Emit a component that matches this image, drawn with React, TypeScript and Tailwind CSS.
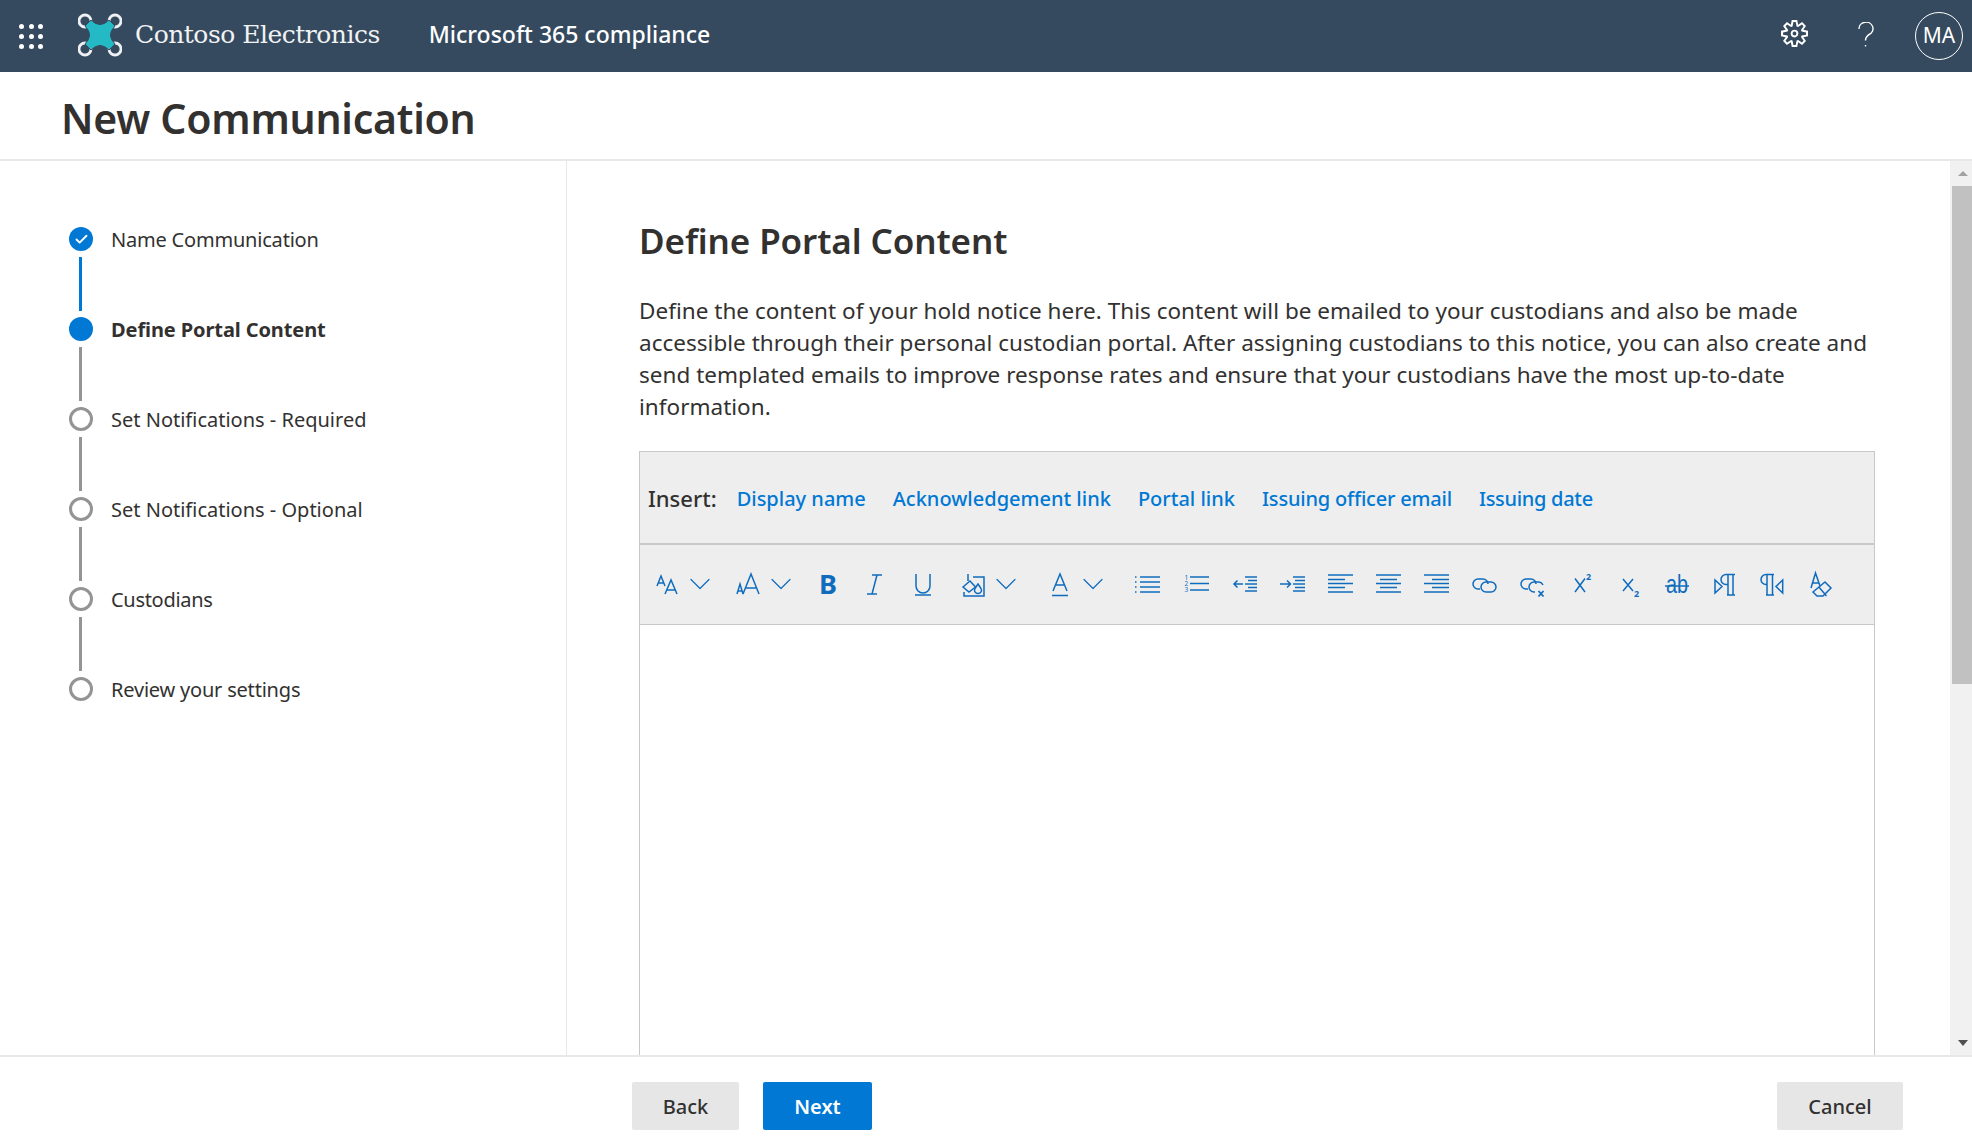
import { Check, ChevronDown } from "lucide-react";
import { VscSettingsGear } from "react-icons/vsc";
import type { ReactNode } from "react";

const steps = [
  { label: "Name Communication", state: "done", cls: "tracking-[-0.2px]" },
  { label: "Define Portal Content", state: "active", cls: "font-bold tracking-[-0.1px]" },
  { label: "Set Notifications - Required", state: "todo", cls: "" },
  { label: "Set Notifications - Optional", state: "todo", cls: "" },
  { label: "Custodians", state: "todo", cls: "tracking-[-0.3px]" },
  { label: "Review your settings", state: "todo", cls: "tracking-[-0.2px]" },
];

const insertLinks = [
  { label: "Display name", cls: "" },
  { label: "Acknowledgement link", cls: "" },
  { label: "Portal link", cls: "" },
  { label: "Issuing officer email", cls: "tracking-[-0.2px]" },
  { label: "Issuing date", cls: "tracking-[-0.3px]" },
];

function Ico({ children }: { children: ReactNode }) {
  return (
    <svg
      width="24"
      height="24"
      viewBox="0 0 24 24"
      fill="none"
      stroke="#0f6cbd"
      strokeWidth="1.5"
      className="overflow-visible"
    >
      {children}
    </svg>
  );
}

const Lines = ({ rows }: { rows: [number, number, number][] }) => (
  <>
    {rows.map(([y, a, b]) => (
      <path key={y} d={`M${a} ${y}H${b}`} />
    ))}
  </>
);

const Chev = ({ cls }: { cls: string }) => (
  <div className={`w-4 flex justify-center ${cls}`}>
    <ChevronDown size={36} strokeWidth={0.8} className="text-[#0f6cbd] shrink-0" />
  </div>
);

function Tool({ cls, children }: { cls: string; children: ReactNode }) {
  return <div className={`w-6 h-6 flex items-center justify-center shrink-0 ${cls}`}>{children}</div>;
}

function Toolbar() {
  return (
    <div className="h-[80px] bg-[#eeeeee] border-b border-[#c8c8c8] flex items-center pl-[15px] pb-[2px]">
      <Tool cls="">
        <Ico>
          <path d="M2 14 6 4l4 10M3.500 11h5M10 22l6-14 6 14M12 18h8" />
        </Ico>
      </Tool>
      <Chev cls="ml-[13px]" />
      <Tool cls="ml-[27px]">
        <Ico>
          <path d="M2 22l3-10 3 10M3 19h4M8 22l8-20 8 20M10.500 16h11" />
        </Ico>
      </Tool>
      <Chev cls="ml-[14px]" />
      <Tool cls="ml-[27px]">
        <span className="text-[27px] font-bold leading-none text-[#0f6cbd]">B</span>
      </Tool>
      <Tool cls="ml-[22px]">
        <Ico>
          <path d="M10 3h10M5 22h10M15 3 10 22" />
        </Ico>
      </Tool>
      <Tool cls="ml-[25px]">
        <Ico>
          <path d="M5 2v12a7 7 0 0 0 14 0V2M4 23h16" />
        </Ico>
      </Tool>
      <Tool cls="ml-[27px]">
        <Ico>
          <path d="M11 5H22V24H2V20" />
          <path d="M6 2v7M1 15l7-6 5.500 6-6.500 5z" />
          <path d="M16 12c-2 3-3.500 4.500-3.500 6a3.500 3.500 0 0 0 7 0c0-1.500-1.500-3-3.500-6z" />
        </Ico>
      </Tool>
      <Chev cls="ml-[12px]" />
      <Tool cls="ml-[34px]">
        <Ico>
          <path d="M5 19 12 2l7 17M7.500 13h9M4 23.500h16" />
        </Ico>
      </Tool>
      <Chev cls="ml-[13px]" />
      <Tool cls="ml-[34px]">
        <Ico>
          <Lines rows={[[5, 5, 25], [10, 5, 25], [15, 5, 25], [20, 5, 25]]} />
          <Lines rows={[[5.010, 0, 1.500], [10.010, 0, 1.500], [15.010, 0, 1.500], [20.010, 0, 1.500]]} />
        </Ico>
      </Tool>
      <Tool cls="ml-[25px]">
        <Ico>
          <Lines rows={[[5, 6, 25], [11.500, 6, 25], [18, 6, 25]]} />
          <text x="0.500" y="8" fontSize="6.500" fill="#0f6cbd" stroke="none">1</text>
          <text x="0.500" y="14" fontSize="6.500" fill="#0f6cbd" stroke="none">2</text>
          <text x="0.500" y="20" fontSize="6.500" fill="#0f6cbd" stroke="none">3</text>
        </Ico>
      </Tool>
      <Tool cls="ml-[25px]">
        <Ico>
          <path d="M10 12H1M4.500 8.500 1 12l3.500 3.500" />
          <Lines rows={[[5, 12, 24], [8.500, 15, 24], [12, 12, 24], [15.500, 15, 24], [19, 12, 24]]} />
        </Ico>
      </Tool>
      <Tool cls="ml-[23px]">
        <Ico>
          <path d="M0 12h10M7 8.500l3.500 3.500L7 15.500" />
          <Lines rows={[[5, 13, 25], [8.500, 15, 25], [12, 13, 25], [15.500, 15, 25], [19, 13, 25]]} />
        </Ico>
      </Tool>
      <Tool cls="ml-[24px]">
        <Ico>
          <Lines rows={[[3, 0, 25], [7.500, 0, 17], [11.500, 0, 25], [15.500, 0, 17], [20, 0, 25]]} />
        </Ico>
      </Tool>
      <Tool cls="ml-[24px]">
        <Ico>
          <Lines rows={[[3, 0, 25], [7.500, 4, 21], [11.500, 0, 25], [15.500, 4, 21], [20, 0, 25]]} />
        </Ico>
      </Tool>
      <Tool cls="ml-[24px]">
        <Ico>
          <Lines rows={[[3, 0, 25], [7.500, 8, 25], [11.500, 0, 25], [15.500, 8, 25], [20, 0, 25]]} />
        </Ico>
      </Tool>
      <Tool cls="ml-[24px]">
        <Ico>
          <path d="M8 17H6a5 5 0 0 1 0-10h5a5 5 0 0 1 5 5" />
          <rect x="9" y="10" width="15" height="10" rx="5" />
        </Ico>
      </Tool>
      <Tool cls="ml-[24px]">
        <Ico>
          <path d="M8 17H6a5 5 0 0 1 0-10h5a5 5 0 0 1 5 5" />
          <path d="M15 20h-1a5 5 0 0 1 0-10h5a5 5 0 0 1 4 3" />
          <path d="M18.500 19l5 5.500M23.500 19l-5 5.500" strokeWidth="1.800" />
        </Ico>
      </Tool>
      <Tool cls="ml-[26px]">
        <Ico>
          <path d="M5 6.500 15 20M15 6.500 5 20" />
          <text x="16" y="8" fontSize="9" fontWeight="700" fill="#0f6cbd" stroke="none">2</text>
        </Ico>
      </Tool>
      <Tool cls="ml-[25px]">
        <Ico>
          <path d="M4 7l10 12M14 7 4 19" />
          <text x="15" y="25" fontSize="9" fontWeight="700" fill="#0f6cbd" stroke="none">2</text>
        </Ico>
      </Tool>
      <Tool cls="ml-[22px]">
        <Ico>
          <text
            x="1"
            y="21"
            fontSize="25"
            textLength="22"
            lengthAdjust="spacingAndGlyphs"
            fill="#0f6cbd"
            stroke="none"
            fontFamily="Liberation Sans"
          >
            ab
          </text>
          <path d="M0 14h24" />
        </Ico>
      </Tool>
      <Tool cls="ml-[23px]">
        <Ico>
          <path d="M3 8v13l7-6.500zM23 2.500H14a5 5 0 0 0 0 10h2M16 2.500V23M21 2.500V23M15 23H23" />
        </Ico>
      </Tool>
      <Tool cls="ml-[24px]">
        <Ico>
          <path d="M22.700 8v13L16 14.500zM14 2.500H6a5 5 0 0 0 0 10h1M7 2.500V23M12.500 2.500V23M6 23H14" />
        </Ico>
      </Tool>
      <Tool cls="ml-[24px]">
        <Ico>
          <path d="M3 16 7.500 1l4.500 13M4.500 11h6" />
          <path d="M17 10l6 6-8 8H9l-4-4zM10.500 14.500l8 9.500" />
        </Ico>
      </Tool>
    </div>
  );
}

function Logo() {
  return (
    <svg width="44" height="44" viewBox="0 0 44 44" fill="none">
      <g stroke="#eef1f4" strokeWidth="2.800">
        <circle cx="7" cy="8" r="6" />
        <circle cx="37" cy="8" r="6" />
        <circle cx="7" cy="36" r="6" />
        <circle cx="37" cy="36" r="6" />
      </g>
      <path
        d="M7 13l6-6q9 9 18 0l6 6q-9 9 0 18l-6 6q-9-9-18 0l-6-6q9-9 0-18z"
        stroke="#354a5f"
        strokeWidth="1"
        fill="#23b9c5"
      />
    </svg>
  );
}

function Step({ label, state, cls, last }: { label: string; state: string; cls: string; last: boolean }) {
  return (
    <div className="flex flex-col">
      <div className="flex items-center h-6">
        {state === "done" && (
          <div className="w-6 h-6 rounded-full bg-[#0078d4] flex items-center justify-center">
            <Check size={15} strokeWidth={3} className="text-white" />
          </div>
        )}
        {state === "active" && <div className="w-6 h-6 rounded-full bg-[#0078d4]" />}
        {state === "todo" && <div className="w-6 h-6 rounded-full border-[3px] border-[#949494]" />}
        <span className={`ml-[18px] pt-[1px] text-[20px] text-[#323130] ${cls}`}>{label}</span>
      </div>
      {!last && (
        <div className={`w-[3px] h-[54px] my-[6px] ml-[10px] ${state === "done" ? "bg-[#0078d4]" : "bg-[#949494]"}`} />
      )}
    </div>
  );
}

export default function App() {
  return (
    <div className="h-screen flex flex-col overflow-hidden bg-white font-['Noto_Sans',sans-serif] text-[#323130]">
      <header className="h-[72px] shrink-0 bg-[#354a5f] flex items-center text-white">
        <div className="ml-[19px] w-6 grid grid-cols-3 gap-[5px]">
          {Array.from({ length: 9 }).map((_, i) => (
            <span key={i} className="w-[5px] h-[5px] rounded-full bg-white" />
          ))}
        </div>
        <div className="ml-[35px] mb-[3px]">
          <Logo />
        </div>
        <span className="ml-[13px] mb-[3px] text-[25px] text-[#f0f2f4] font-['DejaVu_Serif',serif] tracking-[-0.5px]">
          Contoso Electronics
        </span>
        <span className="ml-[49px] mb-[3px] text-[23px] font-medium">Microsoft 365 compliance</span>
        <div className="ml-auto flex items-center">
          <VscSettingsGear size={27} className="mb-[5px]" />
          <svg
            width="20"
            height="26"
            viewBox="0 0 20 26"
            fill="none"
            stroke="white"
            strokeWidth="1.400"
            className="ml-[48px] mb-[3px]"
          >
            <path d="M3 7a7 6.500 0 1 1 10 5.500c-2 1.500-3.500 2.500-3.500 6" />
            <path d="M9.500 23v1.500" />
          </svg>
          <div className="ml-[39px] mr-[9px] w-[48px] h-[48px] rounded-full border border-white flex items-center justify-center text-[21px]">
            MA
          </div>
        </div>
      </header>

      <div className="h-[89px] shrink-0 border-b-2 border-[#e8e8e8] pl-[61px] pt-[6px] flex items-center">
        <h1 className="text-[41px] font-semibold tracking-[-0.25px]">New Communication</h1>
      </div>

      <div className="flex-1 min-h-0 flex">
        <aside className="w-[567px] shrink-0 border-r border-[#e8e8e8] pt-[66px] pl-[69px]">
          {steps.map((s, i) => (
            <Step key={s.label} label={s.label} state={s.state} cls={s.cls} last={i === steps.length - 1} />
          ))}
        </aside>

        <main className="flex-1 min-w-0 flex flex-col pl-[72px] pr-[75px] pt-[55px]">
          <h2 className="text-[35px] font-semibold tracking-[-0.1px] leading-[50px]">Define Portal Content</h2>
          <p className="mt-[29px] text-[22.5px] tracking-[0.02px] leading-[32px]">
            Define the content of your hold notice here. This content will be emailed to your custodians and also be made
            accessible through their personal custodian portal. After assigning custodians to this notice, you can also
            create and send templated emails to improve response rates and ensure that your custodians have the most
            up-to-date information.
          </p>
          <div className="mt-[28px] flex-1 min-h-0 flex flex-col border-x border-t border-[#c8c8c8]">
            <div className="h-[93px] bg-[#eeeeee] border-b-2 border-[#c8c8c8] flex items-center pl-[8px] pt-[2px]">
              <span className="text-[22px] font-medium mr-[20px]">Insert:</span>
              <div className="flex gap-[27px]">
                {insertLinks.map((l) => (
                  <span key={l.label} className={`text-[20px] font-medium text-[#0078d4] ${l.cls}`}>
                    {l.label}
                  </span>
                ))}
              </div>
            </div>
            <Toolbar />
          </div>
        </main>

        <div className="w-[22px] shrink-0 bg-[#f1f1f1] flex flex-col items-end">
          <div className="w-full h-[25px] flex items-center justify-center pl-[4px]">
            <div className="w-0 h-0 border-x-[5px] border-x-transparent border-b-[5px] border-b-[#a3a3a3]" />
          </div>
          <div className="w-[20px] h-[498px] bg-[#c1c1c1]" />
          <div className="flex-1" />
          <div className="w-full h-[25px] flex items-center justify-center pl-[4px]">
            <div className="w-0 h-0 border-x-[5px] border-x-transparent border-t-[6px] border-t-[#505050]" />
          </div>
        </div>
      </div>

      <footer className="h-[90px] shrink-0 border-t-2 border-[#e8e8e8] flex items-start pt-[25px] pl-[632px] pr-[69px] text-[20px]">
        <button className="w-[107px] h-[48px] pt-[2px] rounded-[2px] bg-[#e6e6e6] font-medium">Back</button>
        <button className="ml-[24px] w-[109px] h-[48px] pt-[2px] rounded-[2px] bg-[#0078d4] text-white font-semibold">Next</button>
        <button className="ml-auto w-[126px] h-[48px] pt-[2px] rounded-[2px] bg-[#e6e6e6] font-medium">Cancel</button>
      </footer>
    </div>
  );
}
